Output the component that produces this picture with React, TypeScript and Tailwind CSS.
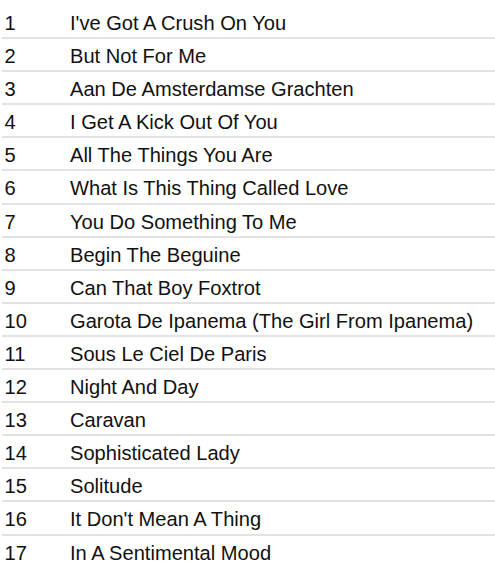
const tracks = [
  "I've Got A Crush On You",
  'But Not For Me',
  'Aan De Amsterdamse Grachten',
  'I Get A Kick Out Of You',
  'All The Things You Are',
  'What Is This Thing Called Love',
  'You Do Something To Me',
  'Begin The Beguine',
  'Can That Boy Foxtrot',
  'Garota De Ipanema (The Girl From Ipanema)',
  'Sous Le Ciel De Paris',
  'Night And Day',
  'Caravan',
  'Sophisticated Lady',
  'Solitude',
  "It Don't Mean A Thing",
  'In A Sentimental Mood',
];

export default function App() {
  return (
    <div className="w-[495px] h-[575px] bg-white pl-[2px] pt-[6px] font-['Liberation_Sans',Arial,sans-serif] text-[20.1px] text-[#111]">
      {tracks.map((title, i) => (
        <div
          key={i}
          className={`flex pt-[6px] pb-[2.1px] leading-[23px] ${
            i < tracks.length - 1 ? 'border-b-2 border-[#e3e3e3]' : ''
          }`}
        >
          <span className="w-[68px] pl-[2.5px]">{i + 1}</span>
          <span className="whitespace-nowrap">{title}</span>
        </div>
      ))}
    </div>
  );
}
